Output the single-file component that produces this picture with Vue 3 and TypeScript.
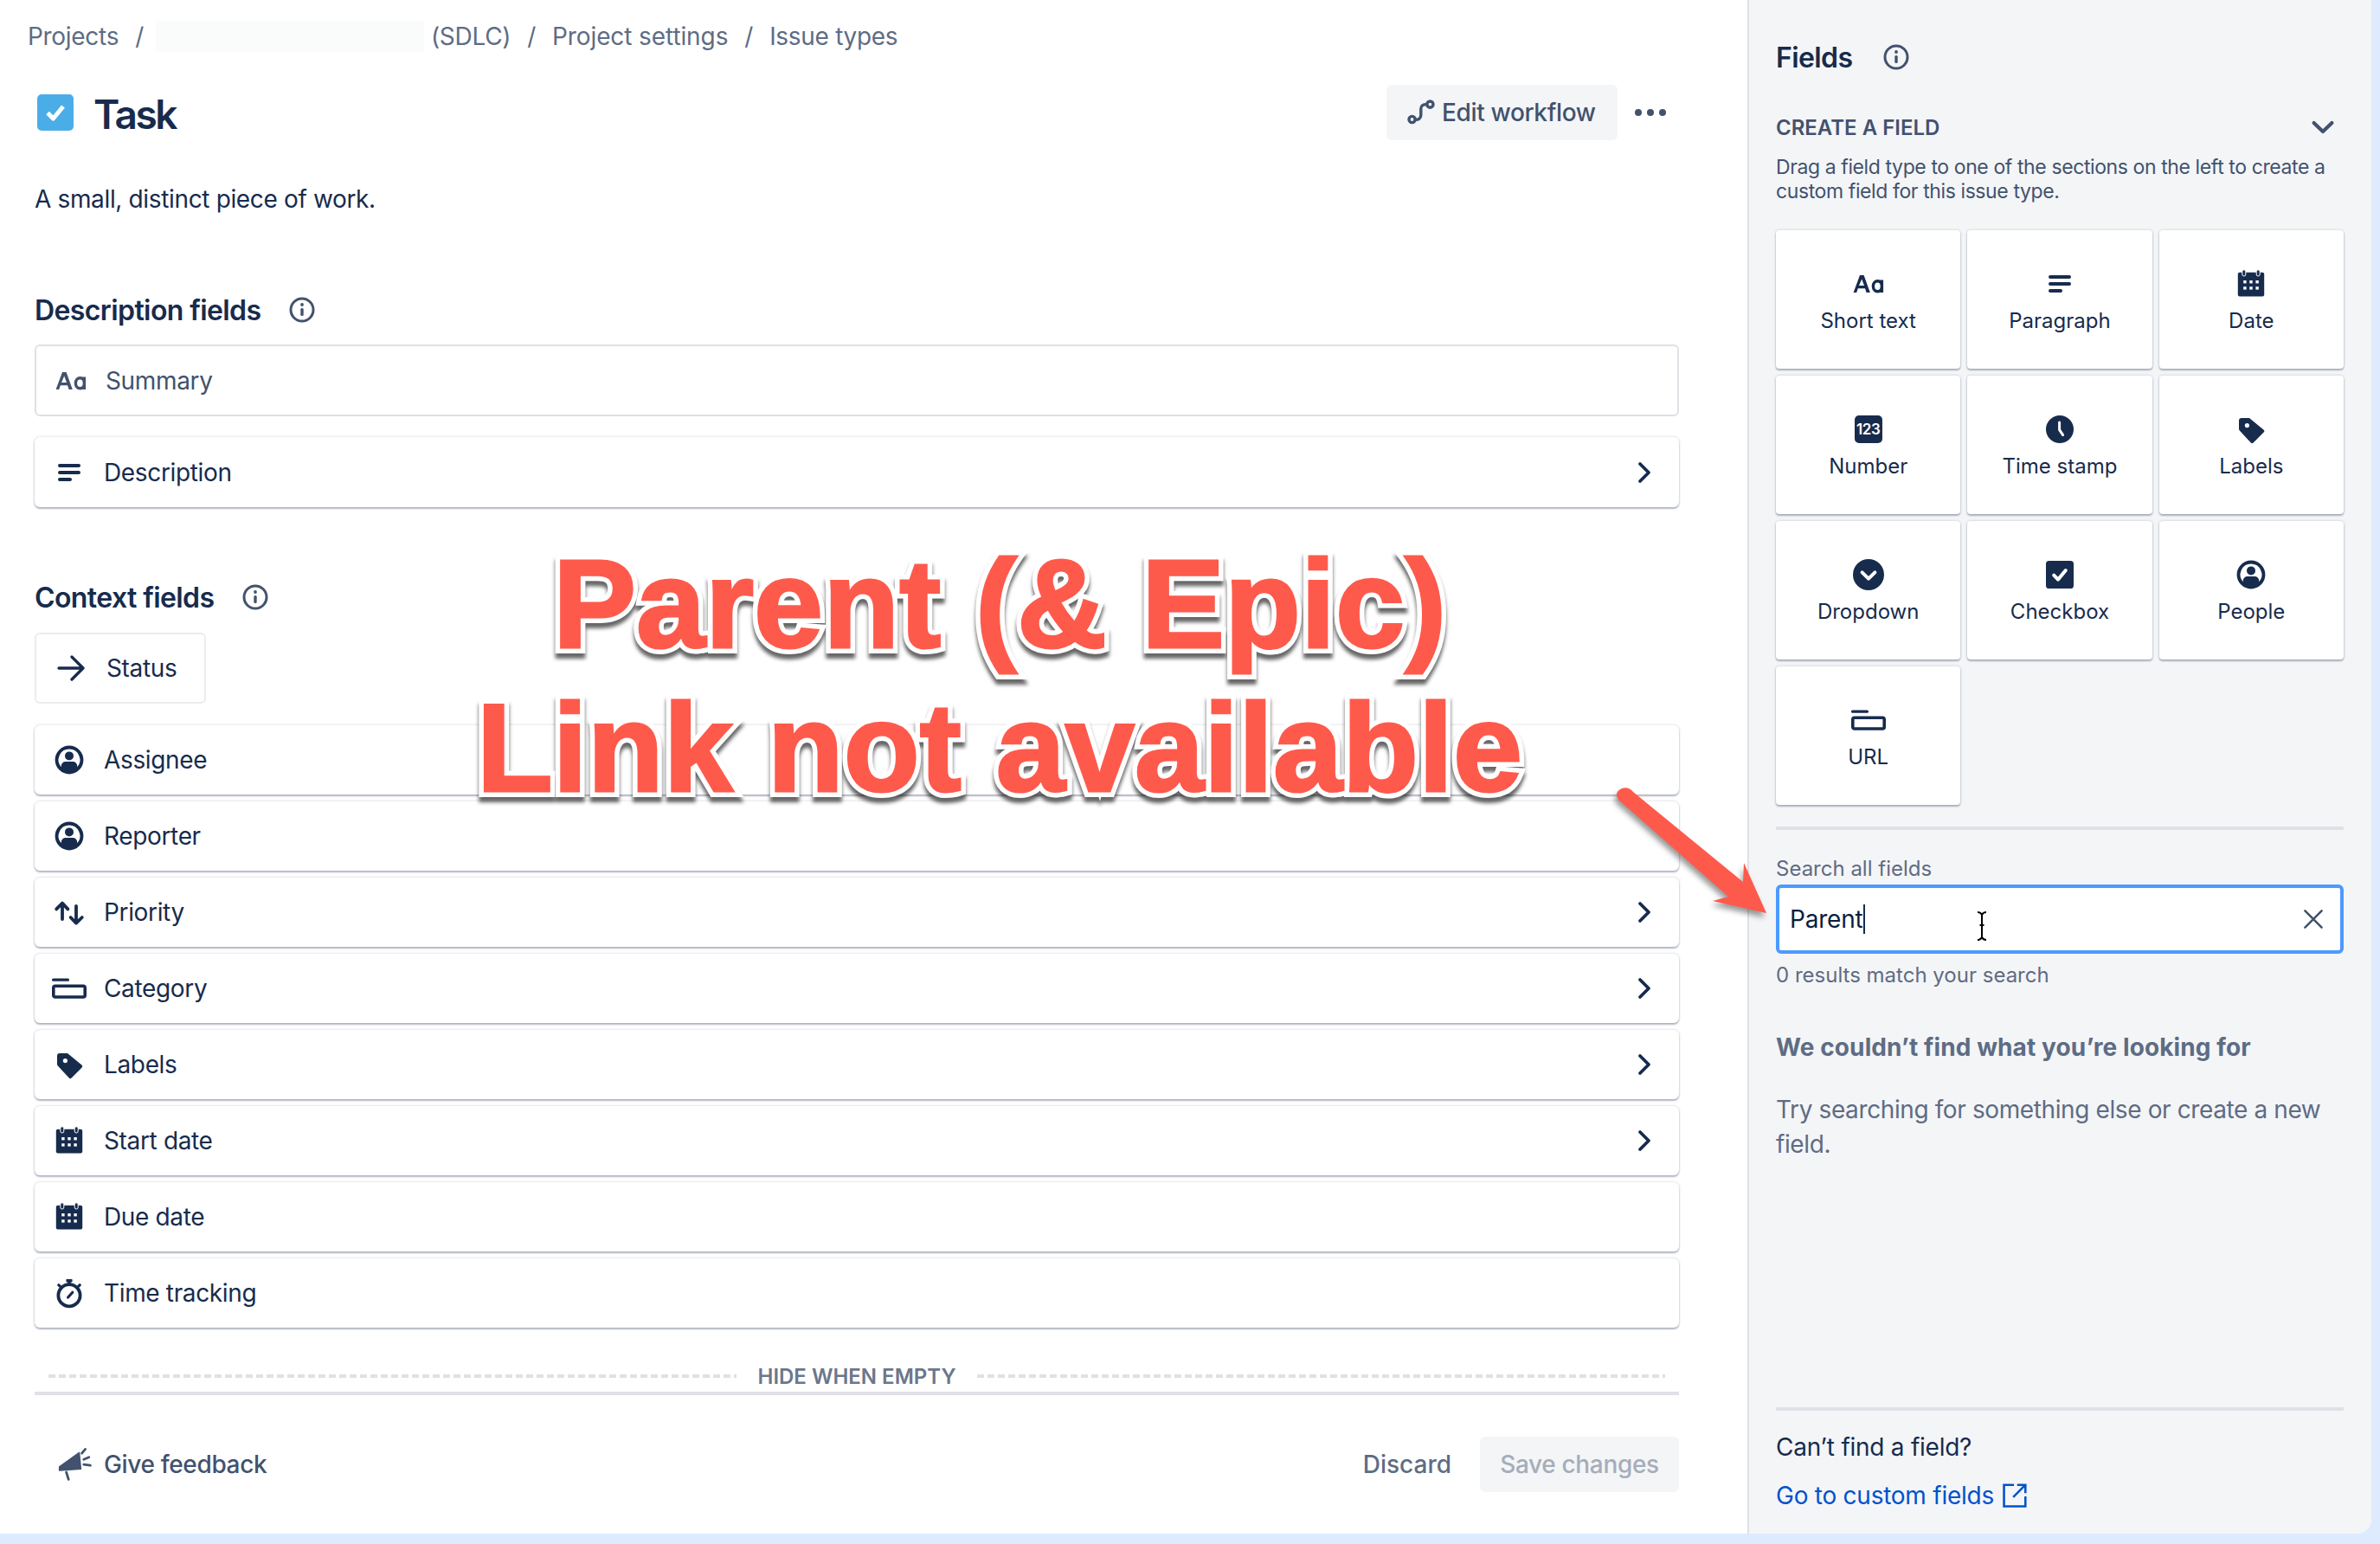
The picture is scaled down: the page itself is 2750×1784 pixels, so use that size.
<script setup lang="ts">
interface FieldRow {
  icon: string
  label: string
  more?: boolean
}

const contextRows: FieldRow[] = [
  { icon: 'person', label: 'Assignee' },
  { icon: 'person', label: 'Reporter' },
  { icon: 'priority', label: 'Priority', more: true },
  { icon: 'category', label: 'Category', more: true },
  { icon: 'tag', label: 'Labels', more: true },
  { icon: 'calendar', label: 'Start date', more: true },
  { icon: 'calendar', label: 'Due date' },
  { icon: 'stopwatch', label: 'Time tracking' },
]

const fieldTypes = [
  { icon: 'text', label: 'Short text' },
  { icon: 'paragraph', label: 'Paragraph' },
  { icon: 'calendar', label: 'Date' },
  { icon: 'number', label: 'Number' },
  { icon: 'clock', label: 'Time stamp' },
  { icon: 'tag', label: 'Labels' },
  { icon: 'dropdown', label: 'Dropdown' },
  { icon: 'checkbox', label: 'Checkbox' },
  { icon: 'person', label: 'People' },
  { icon: 'category', label: 'URL' },
]
</script>

<template>
  <div class="page">
    <svg class="defs" width="0" height="0" aria-hidden="true">
      <symbol id="i-person" viewBox="0 0 24 24">
        <path fill="currentColor" fill-rule="evenodd" d="M12 3.8a8.2 8.2 0 1 1 0 16.4 8.2 8.2 0 0 1 0-16.4Zm0 2a6.2 6.2 0 0 0-4.6 10.35V15.5A2.5 2.5 0 0 1 9.900 13h4.200a2.500 2.500 0 0 1 2.500 2.500v.65A6.200 6.200 0 0 0 12 5.800Zm0 1.400a2.500 2.500 0 1 1 0 5 2.500 2.500 0 0 1 0-5Z" />
      </symbol>
      <symbol id="i-priority" viewBox="0 0 24 24">
        <path fill="none" stroke="currentColor" stroke-width="1.900" stroke-linecap="round" stroke-linejoin="round" d="M8 16V7M4.600 10.200 8 6.800l3.200 3.400M16 8.500V18M12.800 15l3.200 3.300 3.400-3.300" />
      </symbol>
      <symbol id="i-category" viewBox="0 0 24 24">
        <rect x="2" y="6.200" width="10" height="1.700" rx=".8" fill="currentColor" />
        <rect x="2.900" y="10.600" width="18.200" height="6.400" rx="1" fill="none" stroke="currentColor" stroke-width="1.800" />
      </symbol>
      <symbol id="i-tag" viewBox="0 0 24 24">
        <path fill="currentColor" fill-rule="evenodd" d="M6.500 5.500H11l8.200 6.800a1 1 0 0 1 .1 1.500l-6 6a1 1 0 0 1-1.400 0L5.400 12.700a1.500 1.500 0 0 1-.4-1.100V7a1.500 1.500 0 0 1 1.500-1.500Zm3.200 3a1.300 1.300 0 1 0 0 2.600 1.300 1.300 0 0 0 0-2.600Z" />
      </symbol>
      <symbol id="i-calendar" viewBox="0 0 24 24">
        <rect x="4.400" y="5.400" width="15.200" height="13.800" rx="1" fill="currentColor" />
        <rect x="6.900" y="3.900" width="2" height="3.600" rx="1" fill="currentColor" stroke="#fff" stroke-width=".5" />
        <rect x="15.100" y="3.900" width="2" height="3.600" rx="1" fill="currentColor" stroke="#fff" stroke-width=".5" />
        <g fill="#fff">
          <rect x="7.600" y="10" width="1.700" height="1.700" />
          <rect x="11.150" y="10" width="1.700" height="1.700" />
          <rect x="14.700" y="10" width="1.700" height="1.700" />
          <rect x="7.600" y="13.600" width="1.700" height="1.700" />
          <rect x="11.150" y="13.600" width="1.700" height="1.700" />
          <rect x="14.700" y="13.600" width="1.700" height="1.700" />
        </g>
      </symbol>
      <symbol id="i-stopwatch" viewBox="0 0 24 24">
        <circle cx="12" cy="13.400" r="6.300" fill="none" stroke="currentColor" stroke-width="1.900" />
        <rect x="10.200" y="4" width="3.600" height="1.700" rx=".4" fill="currentColor" />
        <rect x="11.100" y="5" width="1.800" height="2" fill="currentColor" />
        <path fill="none" stroke="currentColor" stroke-width="1.600" stroke-linecap="round" d="M5.900 7.400 6.900 8.300M18.100 7.400l-1 .9M11.300 14.500l2.600-2.900" />
      </symbol>
      <symbol id="i-text" viewBox="0 0 24 24">
        <path fill="currentColor" fill-rule="evenodd" d="M7 7h2.300l3.600 10h-2.100l-.8-2.400H5.900L5.100 17H3.300L7 7Zm1.100 2.200-1.600 3.800h3L8.100 9.200Z" />
        <path fill="none" stroke="currentColor" stroke-width="1.700" d="M19.700 9.800V17M19.700 13.400c0 2-1 3-2.400 3-1.500 0-2.600-1.200-2.600-3s1.100-3 2.600-3c1.400 0 2.400 1 2.400 3Z" />
      </symbol>
      <symbol id="i-paragraph" viewBox="0 0 24 24">
        <rect x="5.500" y="7" width="13" height="2" rx="1" fill="currentColor" />
        <rect x="5.500" y="11" width="13" height="2" rx="1" fill="currentColor" />
        <rect x="5.500" y="15" width="8" height="2" rx="1" fill="currentColor" />
      </symbol>
      <symbol id="i-clock" viewBox="0 0 24 24">
        <circle cx="12" cy="12" r="8" fill="currentColor" />
        <path fill="none" stroke="#fff" stroke-width="1.500" stroke-linecap="round" stroke-linejoin="round" d="M11.800 8v4.300l2 3" />
      </symbol>
      <symbol id="i-dropdown" viewBox="0 0 24 24">
        <circle cx="12" cy="12" r="9" fill="currentColor" />
        <path fill="none" stroke="#fff" stroke-width="2" stroke-linecap="round" stroke-linejoin="round" d="m8.300 10.700 3.700 3.600 3.700-3.600" />
      </symbol>
      <symbol id="i-checkbox" viewBox="0 0 24 24">
        <rect x="4" y="4" width="16" height="16" rx="1.800" fill="currentColor" />
        <path fill="none" stroke="#fff" stroke-width="2" stroke-linecap="round" stroke-linejoin="round" d="m8.600 12.300 2.400 2.500 4.400-5.300" />
      </symbol>
      <symbol id="i-info" viewBox="0 0 24 24">
        <circle cx="12" cy="12" r="6.500" fill="none" stroke="currentColor" stroke-width="1.500" />
        <circle cx="12" cy="9" r=".95" fill="currentColor" />
        <rect x="11.150" y="11" width="1.700" height="4.500" rx=".8" fill="currentColor" />
      </symbol>
      <symbol id="i-right" viewBox="0 0 24 24">
        <path fill="none" stroke="currentColor" stroke-width="1.900" stroke-linecap="round" stroke-linejoin="round" d="m9.500 7 5 5-5 5" />
      </symbol>
      <symbol id="i-down" viewBox="0 0 24 24">
        <path fill="none" stroke="currentColor" stroke-width="2.100" stroke-linecap="round" stroke-linejoin="round" d="m6.800 9.500 5.200 5 5.200-5" />
      </symbol>
      <symbol id="i-close" viewBox="0 0 24 24">
        <path fill="none" stroke="currentColor" stroke-width="1.300" stroke-linecap="round" d="m7.200 7.200 9.600 9.600m0-9.600-9.600 9.600" />
      </symbol>
      <symbol id="i-workflow" viewBox="0 0 24 24">
        <g fill="none" stroke="currentColor" stroke-width="1.700">
          <circle cx="6.800" cy="16" r="1.800" />
          <circle cx="17.200" cy="7.300" r="1.800" />
          <path stroke-linecap="round" d="M8.600 16.200c1.700.1 3.300-.6 3.300-2.700V9.800c0-1.800 1.400-2.600 3.500-2.500" />
        </g>
      </symbol>
      <symbol id="i-megaphone" viewBox="0 0 24 24">
        <path fill="currentColor" stroke="currentColor" stroke-linejoin="round" stroke-width=".7" d="M2.300 13.400 13.800 5.200l.9 9.500-12.400.8Z" />
        <path fill="none" stroke="currentColor" stroke-width="1.400" stroke-linecap="round" d="m6.300 16.500 1.300 4.200M15.300 5.600l2-2.400M16.400 9.100l3-1.200M16.400 12.100l3.800.5" />
      </symbol>
      <symbol id="i-external" viewBox="0 0 24 24">
        <path fill="none" stroke="currentColor" stroke-width="1.400" d="M11.500 5.300H5.200v13.500h13.500v-6.300M13.500 5.300h5.200v5.200M18.700 5.300 11 13" />
      </symbol>
    </svg>

    <main class="main">
      <nav class="crumbs">
        <span>Projects</span>
        <i>/</i>
        <span class="redacted"></span>
        <span class="sdlc">(SDLC)</span>
        <i>/</i>
        <span class="settings">Project settings</span>
        <i>/</i>
        <span>Issue types</span>
      </nav>

      <header class="head">
        <svg class="task-icon" viewBox="0 0 42 42">
          <rect width="42" height="42" rx="5" fill="#4bade8" />
          <path d="m12 21.500 6.500 6.500L30 14" fill="none" stroke="#fff" stroke-width="5" stroke-linejoin="round" />
        </svg>
        <h1>Task</h1>
        <button class="edit-btn"><svg class="ic"><use href="#i-workflow" /></svg>Edit workflow</button>
        <div class="dots"><b></b><b></b><b></b></div>
      </header>

      <p class="about">A small, distinct piece of work.</p>

      <h2 class="section first">Description fields <svg class="ic info"><use href="#i-info" /></svg></h2>
      <div class="row flat summary">
        <svg class="ic"><use href="#i-text" /></svg>
        <span>Summary</span>
      </div>
      <div class="row desc">
        <svg class="ic"><use href="#i-paragraph" /></svg>
        <span>Description</span>
        <svg class="ic chevron"><use href="#i-right" /></svg>
      </div>

      <h2 class="section second">Context fields <svg class="ic info"><use href="#i-info" /></svg></h2>
      <div class="status">
        <svg class="status-arrow" viewBox="0 0 34 32"><path d="M3 16h28M18 3l13 13-13 13" fill="none" stroke="#172b4d" stroke-width="3.300" stroke-linecap="round" stroke-linejoin="round" /></svg>
        <span>Status</span>
      </div>
      <div class="rows">
        <div v-for="row in contextRows" :key="row.label" class="row">
          <svg class="ic"><use :href="'#i-' + row.icon" /></svg>
          <span>{{ row.label }}</span>
          <svg v-if="row.more" class="ic chevron"><use href="#i-right" /></svg>
        </div>
      </div>

      <div class="hide-empty">
        <span class="dash"></span>
        <span>HIDE WHEN EMPTY</span>
        <span class="dash"></span>
      </div>

      <footer class="foot">
        <button class="feedback"><svg class="ic"><use href="#i-megaphone" /></svg>Give feedback</button>
        <div class="foot-actions">
          <button class="discard">Discard</button>
          <button class="save">Save changes</button>
        </div>
      </footer>
    </main>

    <aside class="panel">
      <h2 class="panel-title">Fields <svg class="ic info"><use href="#i-info" /></svg></h2>
      <div class="create">
        <span>CREATE A FIELD</span>
        <svg class="ic"><use href="#i-down" /></svg>
      </div>
      <p class="create-text">Drag a field type to one of the sections on the left to create a custom field for this issue type.</p>
      <div class="grid">
        <div v-for="f in fieldTypes" :key="f.label" class="card">
          <span v-if="f.icon === 'number'" class="num-icon"><b>123</b></span>
          <svg v-else class="ic"><use :href="'#i-' + f.icon" /></svg>
          <span class="card-label">{{ f.label }}</span>
        </div>
      </div>
      <div class="rule"></div>
      <label class="search-label">Search all fields</label>
      <div class="search">
        <span class="search-text">Parent</span><span class="caret"></span>
        <svg class="ibeam" viewBox="0 0 16 34"><path d="M3 1c3 0 4 1 5 3 1-2 2-3 5-3M8 4v26M3 33c3 0 4-1 5-3 1 2 2 3 5 3M5.500 16h5" fill="none" stroke="#000" stroke-width="2" /></svg>
        <svg class="ic close"><use href="#i-close" /></svg>
      </div>
      <p class="results">0 results match your search</p>
      <p class="empty-title">We couldn’t find what you’re looking for</p>
      <p class="empty-text">Try searching for something else or create a new field.</p>
      <div class="panel-foot">
        <p>Can’t find a field?</p>
        <a>Go to custom fields <svg class="ext"><use href="#i-external" /></svg></a>
      </div>
    </aside>

    <div class="callout">Parent (&amp; Epic)<br />Link not available</div>
    <svg class="arrow" viewBox="0 0 200 170">
      <path d="M25 9 152 113 153 91 179 149 117 135 135 130 8 18C4 12 6 8 12 5 17 3 22 5 25 9Z" fill="#fe5a4c" />
    </svg>
  </div>
</template>

<style scoped>
.page {
  position: relative;
  display: flex;
  width: 2750px;
  height: 1772px;
  font-family: Inter, "Liberation Sans", sans-serif;
  font-size: 28px;
  color: #172b4d;
}
.defs {
  position: absolute;
}
.ic {
  width: 48px;
  height: 48px;
  flex: none;
}
button {
  border: 0;
  background: none;
  font: inherit;
  letter-spacing: inherit;
  padding: 0;
}
h1, h2, p {
  margin: 0;
}

.main {
  width: 2019px;
  flex: none;
  background: #fff;
  padding: 0 79px 0 40px;
  box-sizing: border-box;
  letter-spacing: -0.35px;
}
.crumbs {
  height: 84px;
  margin-left: -8px;
  display: flex;
  align-items: center;
  color: #5e6c84;
  font-size: 28px;
  line-height: 36px;
  letter-spacing: -0.3px;
}
.crumbs i {
  font-style: normal;
  margin: 0 19px;
}
.redacted {
  width: 310px;
  height: 36px;
  background: #fafbfb;
  margin-left: -5px;
}
.sdlc {
  margin-left: 8px;
}
.settings {
  letter-spacing: -0.1px;
}
.head {
  height: 64px;
  margin-top: 14px;
  display: flex;
  align-items: center;
  position: relative;
}
.task-icon {
  width: 42px;
  height: 42px;
  margin-left: 3px;
}
.head h1 {
  font-size: 46px;
  font-weight: 600;
  line-height: 56px;
  margin-left: 23px;
  margin-top: 3px;
  letter-spacing: -2.5px;
  flex: 1;
}
.edit-btn {
  width: 267px;
  height: 64px;
  display: flex;
  align-items: center;
  padding-left: 16px;
  border-radius: 6px;
  background: #f4f5f7;
  color: #42526e;
  font-weight: 500;
  box-sizing: border-box;
  margin-right: 20px;
  white-space: nowrap;
}
.dots {
  display: flex;
  gap: 6px;
  margin-right: 15px;
}
.dots b {
  width: 8px;
  height: 8px;
  border-radius: 50%;
  background: #42526e;
}
.about {
  margin-top: 48px;
  line-height: 40px;
}
.section {
  display: flex;
  align-items: center;
  height: 40px;
  font-size: 32px;
  font-weight: 600;
  letter-spacing: -0.6px;
}
.section .info {
  margin-left: 24px;
  color: #42526e;
}
.section.first {
  margin-top: 88px;
  margin-bottom: 20px;
}
.section.second {
  margin-top: 84px;
  margin-bottom: 21px;
}
.row {
  position: relative;
  height: 80px;
  display: flex;
  align-items: center;
  gap: 16px;
  padding: 0 16px;
  box-sizing: border-box;
  background: #fff;
  border-radius: 6px;
  box-shadow: 0 2px 2px rgba(9, 30, 66, 0.28), 0 0 3px rgba(9, 30, 66, 0.22);
}
.row.flat {
  height: 83px;
  box-shadow: none;
  border: 2px solid #dfe1e6;
  padding: 0 16px;
  gap: 16px;
  color: #42526e;
}
.row.desc {
  height: 81px;
  margin-top: 24px;
}
.chevron {
  margin-left: auto;
}
.status {
  display: flex;
  align-items: center;
  gap: 24px;
  width: 198px;
  height: 82px;
  padding-left: 23px;
  border: 2px solid #ebecf0;
  border-radius: 6px;
  box-sizing: border-box;
}
.status-arrow {
  width: 34px;
  height: 32px;
  flex: none;
}
.rows {
  display: flex;
  flex-direction: column;
  gap: 8px;
  margin-top: 25px;
}
.hide-empty {
  box-sizing: border-box;
  height: 78px;
  padding: 39px 16px 0;
  display: flex;
  align-items: center;
  gap: 24px;
  border-bottom: 4px solid #dfe1e6;
  color: #6b778c;
  font-size: 24px;
  font-weight: 600;
  line-height: 35px;
  letter-spacing: 0;
  white-space: nowrap;
}
.dash {
  flex: 1;
  height: 4px;
  margin-top: -1px;
  background: repeating-linear-gradient(90deg, #dfe1e6 0 8px, transparent 8px 12px);
}
.foot {
  margin-top: 48px;
  height: 64px;
  display: flex;
  align-items: center;
  justify-content: space-between;
}
.feedback {
  display: flex;
  align-items: center;
  gap: 8px;
  padding-left: 24px;
  color: #42526e;
  font-weight: 500;
}
.foot-actions {
  display: flex;
  align-items: center;
}
.discard {
  color: #5e6c84;
  font-weight: 500;
  margin-right: 33px;
  letter-spacing: 0;
}
.save {
  width: 230px;
  height: 64px;
  border-radius: 6px;
  background: #f4f5f7;
  color: #a5adba;
  font-weight: 500;
}

.panel {
  width: 721px;
  flex: none;
  box-sizing: border-box;
  padding: 46px 32px 0 31px;
  background: #f4f5f7;
  border-left: 2px solid #dfe1e6;
  border-bottom-right-radius: 16px;
  display: flex;
  flex-direction: column;
}
.panel-title {
  height: 40px;
  display: flex;
  align-items: center;
  font-size: 32px;
  font-weight: 600;
  letter-spacing: -0.6px;
}
.panel-title .info {
  margin-left: 27px;
  color: #42526e;
}
.create {
  margin-top: 45px;
  height: 32px;
  display: flex;
  align-items: center;
  justify-content: space-between;
  color: #42526e;
  font-size: 24px;
  font-weight: 600;
}
.create-text {
  margin-top: 16px;
  font-size: 23px;
  line-height: 28px;
  letter-spacing: -0.4px;
  color: #42526e;
}
.grid {
  margin-top: 31px;
  display: grid;
  grid-template-columns: repeat(3, 1fr);
  grid-auto-rows: 160px;
  gap: 8px;
}
.card {
  background: #fff;
  border-radius: 4px;
  box-shadow: 0 2px 2px rgba(9, 30, 66, 0.28), 0 0 3px rgba(9, 30, 66, 0.22);
  display: flex;
  flex-direction: column;
  align-items: center;
  padding-top: 38px;
  box-sizing: border-box;
  font-size: 24px;
  line-height: 32px;
}
.card-label {
  margin-top: 3px;
}
.num-icon {
  width: 32px;
  height: 32px;
  margin: 8px;
  flex: none;
  border-radius: 5px;
  background: #172b4d;
  color: #fff;
  display: flex;
  align-items: center;
  justify-content: center;
  font-size: 17px;
  line-height: 32px;
  letter-spacing: -0.4px;
}
.num-icon b {
  font-weight: 600;
}
.rule {
  margin-top: 25px;
  height: 4px;
  background: #dfe1e6;
  flex: none;
}
.search-label {
  margin-top: 29px;
  font-size: 24px;
  line-height: 32px;
  color: #5e6c84;
}
.search {
  position: relative;
  margin-top: 2px;
  height: 80px;
  flex: none;
  box-sizing: border-box;
  border: 4px solid #4c9aff;
  border-radius: 6px;
  background: #fff;
  display: flex;
  align-items: center;
  padding-left: 12px;
}
.search-text {
  color: #091e42;
  letter-spacing: -0.2px;
}
.caret {
  width: 2px;
  height: 34px;
  background: #172b4d;
}
.ibeam {
  position: absolute;
  left: 226px;
  top: 27px;
  width: 16px;
  height: 34px;
}
.close {
  position: absolute;
  right: 7px;
  top: 12px;
  color: #42526e;
}
.results {
  margin-top: 9px;
  font-size: 24px;
  line-height: 32px;
  color: #5e6c84;
}
.empty-title {
  margin-top: 47px;
  line-height: 40px;
  font-weight: 700;
  letter-spacing: 0.1px;
  color: #5e6c84;
}
.empty-text {
  margin-top: 32px;
  line-height: 40px;
  letter-spacing: -0.39px;
  color: #5e6c84;
}
.panel-foot {
  margin-top: auto;
  border-top: 4px solid #dfe1e6;
  padding: 22px 0 24px;
  letter-spacing: -0.25px;
}
.panel-foot p {
  line-height: 40px;
}
.panel-foot a {
  display: flex;
  align-items: center;
  height: 40px;
  margin-top: 16px;
  line-height: 40px;
  color: #0052cc;
  white-space: pre;
}
.ext {
  width: 44px;
  height: 44px;
  margin: -2px 0 -2px -6px;
  color: #0052cc;
}

.callout {
  position: absolute;
  left: 0;
  top: 616px;
  width: 2310px;
  text-align: center;
  font-family: "Liberation Sans", Arial, sans-serif;
  font-weight: 700;
  font-size: 144px;
  line-height: 166px;
  color: #fff;
  -webkit-text-stroke: 14px #fff;
  filter: drop-shadow(0 6px 2px rgba(0, 0, 0, 0.6));
}
.callout::after {
  content: "Parent (& Epic)\A Link not available";
  white-space: pre;
  position: absolute;
  left: 0;
  top: 0;
  width: 100%;
  color: #fe5a4c;
  -webkit-text-stroke: 3px #fe5a4c;
}
.arrow {
  position: absolute;
  left: 1862px;
  top: 906px;
  width: 200px;
  height: 170px;
  filter: drop-shadow(-2px 5px 3px rgba(0, 0, 0, 0.4));
}
</style>

<style>
body {
  background: #deebff;
}
</style>
